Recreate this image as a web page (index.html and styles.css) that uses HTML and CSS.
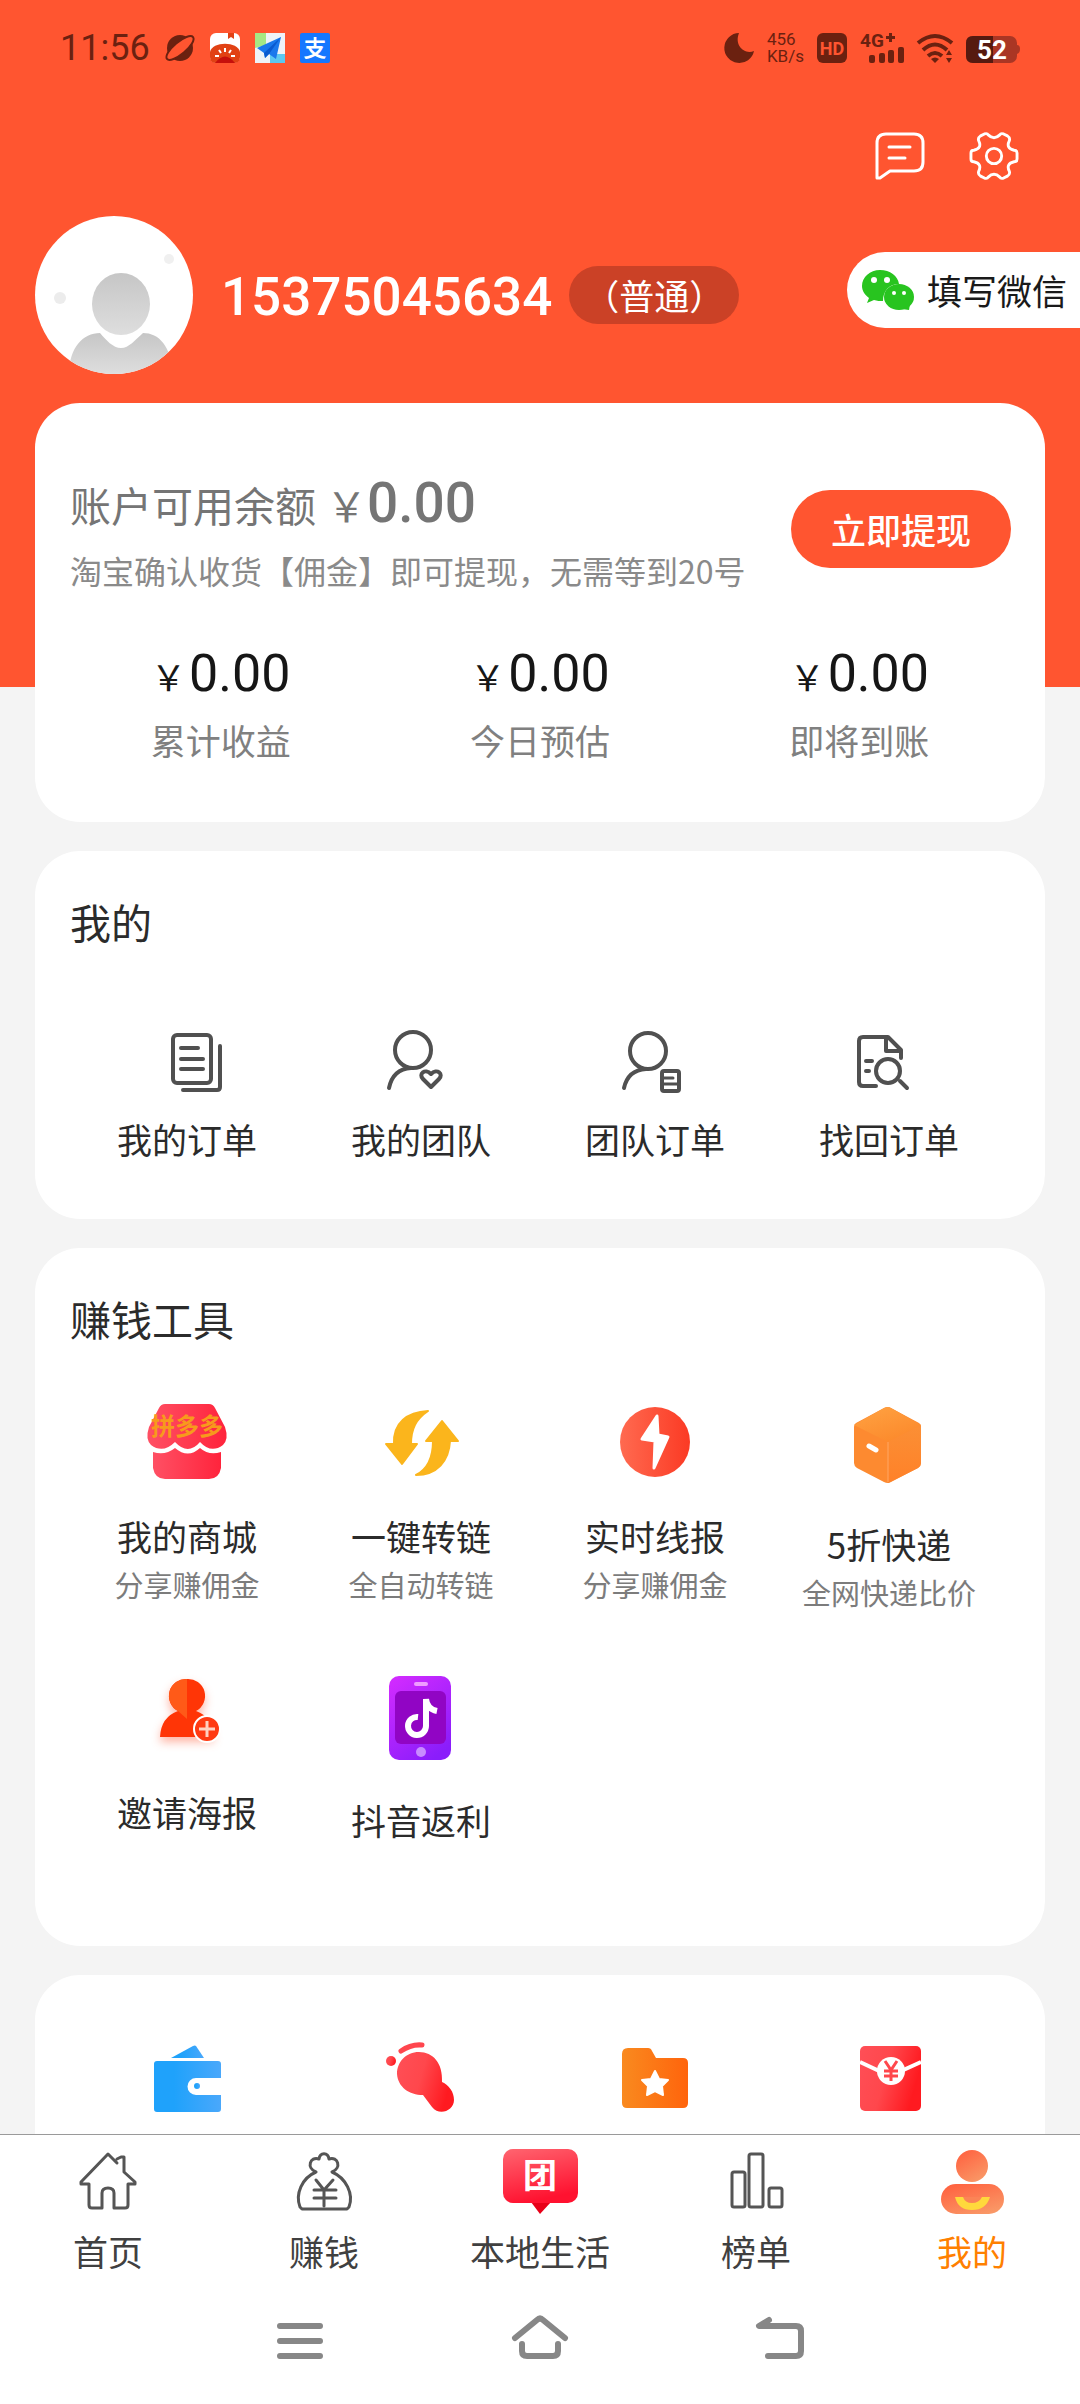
FILE: index.html
```html
<!DOCTYPE html>
<html lang="zh-CN">
<head>
<meta charset="utf-8">
<meta name="viewport" content="width=device-width, initial-scale=1">
<title>我的</title>
<link rel="stylesheet" href="styles.css">
</head>
<body>
<svg class="defs" aria-hidden="true">
  <defs>
    <linearGradient id="g-pink"><stop offset="0" stop-color="#ff5064"/><stop offset="1" stop-color="#ff243c"/></linearGradient>
    <linearGradient id="g-red"><stop offset="0" stop-color="#ff6a50"/><stop offset="1" stop-color="#fb3a24"/></linearGradient>
    <linearGradient id="g-packet" x2="1" y2="0.3"><stop offset="0" stop-color="#ff4f57"/><stop offset="0.5" stop-color="#ff474c"/><stop offset="1" stop-color="#ff1a20"/></linearGradient>
    <linearGradient id="g-folder"><stop offset="0" stop-color="#f98a1f"/><stop offset="1" stop-color="#ff640c"/></linearGradient>
    <linearGradient id="g-blue"><stop offset="0.3" stop-color="#1fa2fb"/><stop offset="1" stop-color="#4aa8fb"/></linearGradient>
    <linearGradient id="g-phone" x1="0.1" y1="0" x2="0.7" y2="1"><stop offset="0" stop-color="#d22bff"/><stop offset="1" stop-color="#8a1dfb"/></linearGradient>
    <linearGradient id="g-me" x1="0.2" y1="0" x2="0.8" y2="1"><stop offset="0" stop-color="#ff6240"/><stop offset="1" stop-color="#f99a68"/></linearGradient>
    <linearGradient id="g-local" x2="0.3" y2="1"><stop offset="0" stop-color="#ff6570"/><stop offset="1" stop-color="#ff1230"/></linearGradient>
    <linearGradient id="g-grey" x2="0" y2="1"><stop offset="0" stop-color="#c6c6c6"/><stop offset="1" stop-color="#dedede"/></linearGradient>
    <linearGradient id="g-box-top" x2="0.6" y2="1"><stop offset="0" stop-color="#ffa343"/><stop offset="1" stop-color="#fc8a2c"/></linearGradient>
    <linearGradient id="g-box-side" x2="0" y2="1"><stop offset="0" stop-color="#fb8f35"/><stop offset="1" stop-color="#ff8128"/></linearGradient>
    <clipPath id="c-avatar"><circle cx="79" cy="79" r="79"/></clipPath>
  </defs>
</svg>

<main class="page">
  <header class="hero">
    <div class="status">
      <div class="status-apps">
        <span class="status-time">11:56</span>
        <svg width="30" height="30" viewBox="0 0 30 30"><circle cx="15" cy="15" r="13" fill="#6b2110"/><ellipse cx="15" cy="15" rx="17" ry="6" transform="rotate(-40 15 15)" fill="#ff5530" stroke="#6b2110" stroke-width="2"/></svg>
        <svg width="30" height="30" viewBox="0 0 30 30"><rect width="30" height="30" rx="6" fill="#fff"/><path d="M0 19C2 8 28 8 30 19v5q0 6-6 6H6q-6 0-6-6Z" fill="#e14114"/><path d="M5 30q10-13 20 0Z" fill="#c6100c"/><path d="M18 0v6l3-2 3 2V0Z" fill="#e14114"/><path d="M15 15v4M9 17l2 3M21 17l-2 3M5 23h4M25 23h-4" stroke="#fff" stroke-width="2"/></svg>
        <svg width="30" height="30" viewBox="0 0 30 30"><path fill="#eef3f8" d="M0 0h30v30H0Z"/><path fill="#a6e884" d="M0 0h11v12L0 15Z"/><path fill="#5cc8f0" d="M15 30V21h15v9Z"/><path fill="#1a78ec" d="M26 4 2 15l7 5 1 5 4-4 7 5Z"/><path fill="#0a5ad0" d="M26 4 9 20l1 5 4-4Z"/></svg>
        <svg width="30" height="30" viewBox="0 0 30 30"><rect width="30" height="30" rx="2" fill="#1677ff"/><text class="glyph" x="15" y="23" font-size="22" font-weight="700" fill="#fff">支</text></svg>
      </div>
      <div class="status-signals">
        <svg width="30" height="30" viewBox="0 0 30 30"><path d="M15 0A15 15 0 1 0 30 18C20 22 10 12 15 0Z" fill="#6b2110"/></svg>
        <span class="status-net">456<br>KB/s</span>
        <svg width="30" height="30" viewBox="0 0 30 30"><rect width="30" height="30" rx="6" fill="#6b2110"/><text class="latin" x="15" y="22" font-size="18" font-weight="700" text-anchor="middle" fill="#ff5530">HD</text></svg>
        <svg width="44" height="30" viewBox="0 0 44 30" fill="#6b2110"><text class="latin" x="0" y="14" font-size="19" font-weight="700">4G</text><path d="M26 3h3V0h3v3h3v3h-3v3h-3V6h-3Z"/><rect x="9" y="22" width="6" height="8" rx="2"/><rect x="19" y="20" width="6" height="10" rx="2"/><rect x="28" y="17" width="6" height="13" rx="2"/><rect x="38" y="14" width="6" height="16" rx="2"/></svg>
        <svg width="36" height="30" viewBox="0 0 36 30" fill="none" stroke="#6b2110" stroke-width="4"><path d="M1 10Q18-4 35 10M6 17Q18 6 30 17M11 23q7-6 14 0"/><path d="m14 26 4 4 4-4q-4-3-8 0Zm15-4 3-5 3 5Zm0 3 3 5 3-5Z" fill="#6b2110" stroke="none"/></svg>
        <svg width="54" height="30" viewBox="0 0 54 30"><rect y="3" width="51" height="27" rx="7" fill="#aa3624"/><path d="M27 3H7Q0 3 0 10v13q0 7 7 7h20Z" fill="#561a10"/><path d="M51 12q3 0 3 4t-3 5Z" fill="#aa3624"/><text class="latin" x="26" y="26" font-size="26" font-weight="700" text-anchor="middle" fill="#fff">52</text></svg>
      </div>
    </div>

    <div class="actions">
      <a class="action" href="#messages" aria-label="消息">
        <svg width="50" height="48" viewBox="0 0 50 48" fill="none" stroke="#fff" stroke-width="3" stroke-linecap="round" stroke-linejoin="round"><path d="M2 46V11Q2 2 11 2H39Q48 2 48 11V30Q48 39 39 39H15L5 46Z"/><path d="M14 15H35M14 26H30"/></svg>
      </a>
      <a class="action" href="#settings" aria-label="设置">
        <svg width="50" height="48" viewBox="0 0 50 50" fill="none" stroke="#fff" stroke-width="3" stroke-linejoin="round"><circle cx="25" cy="25" r="8"/><path d="M46 19Q49 19 49 22V28Q49 31 46 31 37 33 41 41 42 44 39 46L35 48Q32 49 31 47 25 41 19 47 18 49 15 48L11 46Q8 44 9 41 13 33 4 31 1 31 1 28V22Q1 19 4 19 13 17 9 9 8 6 11 4L15 2Q18 1 19 3 25 9 31 3 32 1 35 2L39 4Q42 6 41 9 37 17 46 19Z"/></svg>
      </a>
    </div>

    <div class="profile">
      <svg class="avatar" width="158" height="158" viewBox="0 0 158 158"><g clip-path="url(#c-avatar)"><path fill="#fff" d="M0 0h158v158H0Z"/><ellipse cx="86" cy="88" rx="29" ry="31" fill="url(#g-grey)"/><path d="M34 158C34 132 48 117 65 117 71 124 78 132 86 132S100 124 108 117C124 117 136 130 138 158Z" fill="url(#g-grey)"/><circle cx="25" cy="82" r="6" fill="#ececec"/><circle cx="134" cy="43" r="5" fill="#f0f0f0"/></g></svg>
      <h1 class="name">15375045634</h1>
      <span class="level">（普通）</span>
      <a class="wechat" href="#wechat">
        <svg width="52" height="40" viewBox="0 0 52 40"><path d="M18 0C8 0 0 7 0 16c0 5 3 9 7 12l-2 5 7-3c3 1 6 1 9 1 0-10 6-17 16-17C36 6 28 0 18 0Z" fill="#28c41f"/><ellipse cx="37" cy="27" rx="15" ry="13" fill="#28c41f"/><path d="m40 39 8-5-1 6Z" fill="#28c41f"/><circle cx="12" cy="10" r="3" fill="#fff"/><circle cx="25" cy="10" r="3" fill="#fff"/><circle cx="32" cy="23" r="2" fill="#fff"/><circle cx="42" cy="23" r="2" fill="#fff"/></svg>
        填写微信
      </a>
    </div>
  </header>

  <div class="cards">
    <section class="card wallet">
      <div class="balance">
        <div class="balance-text">
          <p class="balance-line"><span>账户可用余额</span><span>&#xFFE5;<strong>0.00</strong></span></p>
          <p class="balance-note">淘宝确认收货【佣金】即可提现，无需等到20号</p>
        </div>
        <button class="withdraw" type="button">立即提现</button>
      </div>
      <dl class="stats">
        <div class="stat"><dt>累计收益</dt><dd><span>&#xFFE5;</span>0.00</dd></div>
        <div class="stat"><dt>今日预估</dt><dd><span>&#xFFE5;</span>0.00</dd></div>
        <div class="stat"><dt>即将到账</dt><dd><span>&#xFFE5;</span>0.00</dd></div>
      </dl>
    </section>

    <section class="card mine">
      <h2>我的</h2>
      <div class="grid">
        <a class="item" href="#orders">
          <svg class="icon line" viewBox="0 0 88 88"><rect x="30" y="33" width="38" height="48" rx="4"/><path d="M38 46H55M38 57H60M38 67H60"/><path d="M77 44V85Q77 88 74 88H40"/></svg>
          <span class="label">我的订单</span>
        </a>
        <a class="item" href="#team">
          <svg class="icon line" viewBox="0 0 88 88"><circle cx="36" cy="48" r="18"/><path d="M12 86Q16 67 34 66"/><path d="M54 85 46 77C41 72 48 66 54 72 60 66 67 72 62 77Z"/></svg>
          <span class="label">我的团队</span>
        </a>
        <a class="item" href="#team-orders">
          <svg class="icon line" viewBox="0 0 88 88"><circle cx="37" cy="49" r="18"/><path d="M13 86Q17 68 35 67"/><rect x="51" y="69" width="17" height="20" rx="2"/><path d="M52 76H62M52 82H67" stroke-width="3"/></svg>
          <span class="label">团队订单</span>
        </a>
        <a class="item" href="#find-order">
          <svg class="icon line" viewBox="0 0 88 88"><path d="M31 84H18Q14 84 14 80V39Q14 35 18 35H43L56 48V56M41 36V49H56"/><circle cx="43" cy="69" r="12"/><path d="M21 59H27M21 69H24M55 79 62 86"/></svg>
          <span class="label">找回订单</span>
        </a>
      </div>
    </section>

    <section class="card tools">
      <h2>赚钱工具</h2>
      <div class="grid">
        <a class="item" href="#mall">
          <svg class="icon" viewBox="0 0 88 88"><path d="M22 5H66Q70 5 72 9L82 28Q86 40 80 46 68 55 57 43 45 57 32 43 20 55 8 46 2 40 6 28L16 9Q18 5 22 5Z" fill="url(#g-pink)"/><path d="M10 53Q22 57 32 49 45 60 57 49 66 57 78 53V69Q76 80 66 80H22Q12 80 10 69Z" fill="url(#g-pink)"/><text class="glyph" x="44" y="36" font-size="24" font-weight="700" fill="#f79a1c">拼多多</text></svg>
          <span class="label">我的商城</span>
          <span class="hint">分享赚佣金</span>
        </a>
        <a class="item" href="#convert">
          <svg class="icon" viewBox="0 0 88 88" fill="#fbb51c" stroke="#fbb51c" stroke-width="2" stroke-linejoin="round"><path d="M51 12C39 20 34 30 34 45H40L25 65 9 45H17C16 24 30 13 51 12Z"/><path d="M39 76C51 70 56 58 56 42H49L65 22 81 42H73C72 62 60 76 39 76Z"/></svg>
          <span class="label">一键转链</span>
          <span class="hint">全自动转链</span>
        </a>
        <a class="item" href="#news">
          <svg class="icon" viewBox="0 0 88 88"><circle cx="44" cy="43" r="35" fill="url(#g-red)"/><path d="M46 17 31 40 44 42 43 69 57 38 47 36Z" fill="#fff" stroke="#fff" stroke-width="3" stroke-linejoin="round"/></svg>
          <span class="label">实时线报</span>
          <span class="hint">分享赚佣金</span>
        </a>
        <a class="item" href="#express">
          <svg class="icon tall" viewBox="0 0 88 96"><path d="M39 9Q43 7 46 9L74 24Q76 25 76 28V64Q76 67 73 69L46 83Q43 85 39 83L12 69Q9 67 9 64V28Q9 25 11 24Z" fill="#fd8a30"/><path d="M39 9Q43 7 46 9L76 26 43 43 9 26Z" fill="url(#g-box-top)"/><path d="M43 43 76 26V64Q76 67 73 69L43 84Z" fill="url(#g-box-side)"/><path d="M43 43V83" stroke="#ffa765"/><path d="m24 47 7 4" stroke="#fff" stroke-width="5" stroke-linecap="round"/></svg>
          <span class="label">5折快递</span>
          <span class="hint">全网快递比价</span>
        </a>
        <a class="item" href="#poster">
          <svg class="icon" viewBox="0 0 88 88"><g class="glow"><path d="M44 4A17 17 0 0 0 35 36Q18 42 17 62H71Q70 42 53 36A17 17 0 0 0 44 4Z" fill="#ff3506"/><path d="M44 4A17 17 0 0 0 35 36L44 44Z" fill="#ff5a18"/></g><circle cx="64" cy="54" r="13" fill="#ff3a12" stroke="#fff" stroke-width="2"/><path d="M56 54H72M64 46V62" stroke="#ffd0c0" stroke-width="3"/></svg>
          <span class="label">邀请海报</span>
        </a>
        <a class="item" href="#douyin">
          <svg class="icon tall" viewBox="0 0 88 96"><rect x="12" y="1" width="62" height="84" rx="10" fill="url(#g-phone)"/><rect x="18" y="16" width="51" height="53" rx="6" fill="#9105c4"/><rect x="37" y="7" width="14" height="4" rx="2" fill="#ef9dff"/><circle cx="44" cy="77" r="5" fill="#c88cff"/><path d="M41 42A9 9 0 1 0 49 51V24Q50 34 60 36" fill="none" stroke="#fff" stroke-width="6"/></svg>
          <span class="label">抖音返利</span>
        </a>
      </div>
    </section>

    <section class="card more">
      <div class="grid">
        <a class="item" href="#purse" aria-label="钱包">
          <svg class="icon" viewBox="0 0 88 88" fill="url(#g-blue)"><path d="M14 26H75Q78 26 78 29V43H53A8 8 0 0 0 53 60H78V74Q78 77 75 77H14Q11 77 11 74V29Q11 26 14 26Z"/><path d="M28 23 50 11Q52 10 53 11L61 23Z"/><circle cx="54" cy="51" r="3"/></svg>
        </a>
        <a class="item" href="#foot" aria-label="足迹">
          <svg class="icon" viewBox="0 0 88 88" fill="url(#g-packet)"><path d="M42 17C29 17 20 27 20 39 21 52 32 60 46 60L55 72C63 82 77 75 77 65 77 57 72 50 65 47 66 28 56 17 42 17Z"/><circle cx="14" cy="26" r="5"/><path d="M24 16Q34 9 45 10" fill="none" stroke="#ff464e" stroke-width="5" stroke-linecap="round"/></svg>
        </a>
        <a class="item" href="#favorites" aria-label="收藏">
          <svg class="icon" viewBox="0 0 88 88"><path d="M17 13H37Q40 13 41 16L45 23H72Q77 23 77 28V68Q77 73 72 73H16Q11 73 11 68V19Q11 13 17 13Z" fill="url(#g-folder)"/><path d="m44 36 4 8 9 1-6 6 1 9-8-4-8 4 1-9-6-6 9-1Z" fill="#fff" stroke="#fff" stroke-width="2" stroke-linejoin="round"/></svg>
        </a>
        <a class="item" href="#packet" aria-label="红包">
          <svg class="icon" viewBox="0 0 88 88"><rect x="15" y="11" width="61" height="65" rx="5" fill="url(#g-packet)"/><path d="M15 27 45 41 76 27" fill="none" stroke="#fff" stroke-width="4"/><circle cx="46" cy="36" r="14" fill="#fff"/><path d="m40 26 6 9 6-9M46 35V46M39 36H53M39 41H53" fill="none" stroke="#ff474c" stroke-width="3"/></svg>
        </a>
      </div>
    </section>
  </div>
</main>

<nav class="tabs">
  <a class="tab" href="#home">
    <svg class="tab-icon" viewBox="0 0 72 72"><path d="M45 11 49 9H52V24L63 34V36H56V57Q56 60 53 60H42V45Q42 40 36 40T30 45V60H20Q17 60 17 57V36H9V34L36 6 45 15"/></svg>
    <span>首页</span>
  </a>
  <a class="tab" href="#earn">
    <svg class="tab-icon" viewBox="0 0 72 72"><path d="M28 24C18 20 22 8 31 11 32 4 40 4 41 11 50 8 54 20 44 24 58 30 66 46 61 59L59 61H14L12 59C7 46 14 30 28 24"/><path d="m28 32 8 10 9-10M36 42V58M26 42H48M26 50H48"/></svg>
    <span>赚钱</span>
  </a>
  <a class="tab" href="#local">
    <svg class="tab-icon filled" viewBox="0 0 72 72"><path d="M27 54H47L36 66Z" fill="#e80018"/><rect x="-1" y="1" width="75" height="54" rx="10" fill="url(#g-local)"/><text class="glyph" x="36" y="40" font-size="34" font-weight="700" fill="#fff">团</text></svg>
    <span>本地生活</span>
  </a>
  <a class="tab" href="#rank">
    <svg class="tab-icon" viewBox="0 0 72 72"><rect x="12" y="24" width="13" height="35" rx="2"/><rect x="29" y="6" width="14" height="53" rx="2"/><rect x="49" y="40" width="13" height="19" rx="2"/></svg>
    <span>榜单</span>
  </a>
  <a class="tab active" href="#me" aria-current="page">
    <svg class="tab-icon filled" viewBox="0 0 72 72"><circle cx="36" cy="18" r="16" fill="url(#g-me)"/><rect x="5" y="36" width="63" height="30" rx="15" fill="url(#g-me)"/><path d="M19 49H54Q50 62 36 62T19 49Z" fill="#ffd93c"/><path d="M27 49H46Q43 55 36 55T27 49Z" fill="#fb8456"/></svg>
    <span>我的</span>
  </a>
</nav>

<div class="system">
  <button type="button" aria-label="任务"><svg viewBox="0 0 56 56"><path d="M8 14H48M8 29H48M8 44H48"/></svg></button>
  <button type="button" aria-label="桌面"><svg viewBox="0 0 56 56"><path d="M3 26 25 8Q28 5 31 8L53 26M10 32V39Q10 44 15 44H41Q46 44 46 39V32"/></svg></button>
  <button type="button" aria-label="返回"><svg viewBox="0 0 56 56"><path d="M17 8 7 14H44Q49 14 49 19V39Q49 44 44 44H16"/></svg></button>
</div>
</body>
</html>
```
FILE: styles.css
```css
* {
  box-sizing: border-box;
}

body {
  margin: 0;
  height: 100vh;
  display: flex;
  flex-direction: column;
  background: #fff;
  color: #2b2b2b;
  font-family: "Noto Sans CJK SC", sans-serif;
  font-size: 35px;
  line-height: 48px;
}

h1, h2, p, dl, dd {
  margin: 0;
  font-weight: 400;
}

a {
  color: inherit;
  text-decoration: none;
}

button {
  border: 0;
  padding: 0;
  background: none;
  font: inherit;
}

svg {
  display: block;
  flex: none;
  overflow: visible;
}

.defs {
  position: absolute;
  width: 0;
  height: 0;
}

.glyph {
  text-anchor: middle;
}

.latin {
  font-family: Roboto, sans-serif;
}

.page {
  flex: 1;
  min-height: 0;
  overflow: hidden;
  background: #f4f4f4;
}

/* Header */

.hero {
  padding-bottom: 313px;
  background: #ff5530;
}

.status {
  display: flex;
  align-items: center;
  justify-content: space-between;
  height: 96px;
  padding: 0 60px;
  color: #6b2110;
  font-family: Roboto, sans-serif;
}

.status-apps,
.status-signals {
  display: flex;
  align-items: center;
  gap: 15px;
}

.status-signals {
  gap: 13px;
}

.status-time {
  font-size: 36px;
}

.status-net {
  font-size: 17px;
  line-height: 17px;
}

.actions {
  display: flex;
  justify-content: flex-end;
  gap: 44px;
  margin: 36px 0;
  padding: 0 61px;
}

.profile {
  display: flex;
  align-items: center;
  padding-left: 35px;
}

.name {
  margin: 0 17px 0 28px;
  padding-top: 4px;
  color: #fff;
  font-family: Roboto, sans-serif;
  font-size: 53px;
  font-weight: 500;
}

.level {
  padding: 5px 15px;
  border-radius: 30px;
  background: #cb4126;
  color: #fff;
}

.wechat {
  display: flex;
  align-items: center;
  gap: 13px;
  margin: 0 0 10px auto;
  padding: 14px 13px 14px 15px;
  border-radius: 38px 0 0 38px;
  background: #fff;
  color: #1a1a1a;
}

/* Cards */

.cards {
  display: flex;
  flex-direction: column;
  gap: 29px;
  margin-top: -284px;
  padding: 0 35px;
}

.card {
  border-radius: 45px;
  background: #fff;
}

.card h2 {
  padding: 42px 35px 53px;
  font-size: 41px;
  line-height: 56px;
}

.wallet {
  padding: 69px 26px 58px;
}

.balance {
  display: flex;
  align-items: flex-start;
  justify-content: space-between;
  padding: 0 8px 0 9px;
}

.balance-line {
  display: flex;
  gap: 10px;
  color: #757575;
  font-size: 41px;
  line-height: 64px;
}

.balance-line strong {
  font-family: Roboto, sans-serif;
  font-size: 55px;
  font-weight: 500;
  line-height: 55px;
}

.balance-note {
  margin-top: 10px;
  color: #8a8a8a;
  font-size: 32px;
  line-height: 48px;
}

.withdraw {
  width: 220px;
  margin-top: 18px;
  padding: 15px 0;
  border-radius: 39px;
  background: #ff5530;
  color: #fff;
  font-weight: 500;
}

.stats {
  display: grid;
  grid-template-columns: repeat(3, 1fr);
  margin-top: 48px;
  text-align: center;
}

.stat {
  display: flex;
  flex-direction: column-reverse;
  gap: 10px;
}

.stat dd {
  color: #161616;
  font-family: Roboto, sans-serif;
  font-size: 52px;
  line-height: 64px;
}

.stat dd span {
  margin-right: 3px;
  font-family: "Noto Sans CJK SC", sans-serif;
  font-size: 35px;
  line-height: 35px;
}

.stat dt {
  color: #808080;
}

.grid {
  display: grid;
  grid-template-columns: repeat(4, 1fr);
  row-gap: 59px;
  padding: 0 39px 0 35px;
}

.item {
  display: flex;
  flex-direction: column;
  align-items: center;
}

.icon {
  width: 88px;
  height: 88px;
  margin-bottom: 25px;
}

.icon.tall {
  height: 96px;
}

.icon.line {
  fill: none;
  stroke: #505050;
  stroke-width: 4px;
  stroke-linecap: round;
  stroke-linejoin: round;
}

.glow {
  filter: drop-shadow(0 5px 5px rgba(255, 70, 30, 0.4));
}

.hint {
  color: #7c7c7c;
  font-size: 29px;
}

.mine {
  padding-bottom: 56px;
}

.tools {
  padding-bottom: 102px;
}

.more {
  padding: 60px 0;
}

/* Bottom navigation */

.tabs {
  display: grid;
  grid-template-columns: repeat(5, 1fr);
  padding-top: 13px;
  border-top: 1px solid #9a9a9a;
  color: #404040;
}

.tab {
  display: flex;
  flex-direction: column;
  align-items: center;
  gap: 7px;
}

.tab.active {
  color: #ff8000;
}

.tab-icon {
  width: 72px;
  height: 72px;
  fill: none;
  stroke: #555;
  stroke-width: 3px;
  stroke-linecap: round;
  stroke-linejoin: round;
}

.tab-icon.filled {
  stroke: none;
}

.system {
  display: grid;
  grid-template-columns: repeat(3, 1fr);
  justify-items: center;
  padding: 37px 16.6667% 36px;
}

.system svg {
  width: 56px;
  height: 56px;
  fill: none;
  stroke: #878787;
  stroke-width: 6px;
  stroke-linecap: round;
  stroke-linejoin: round;
}
```
